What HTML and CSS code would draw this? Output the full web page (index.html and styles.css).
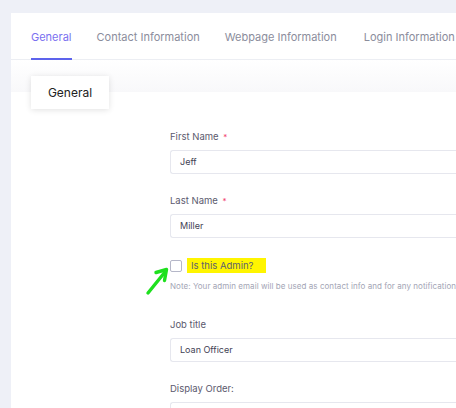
FILE: index.html
```html
<!DOCTYPE html>
<html>
<head>
<meta charset="utf-8">
<link rel="stylesheet" href="styles.css">
</head>
<body>
<div class="card">
  <nav class="tabs">
    <span class="tab active">General</span>
    <span class="tab">Contact Information</span>
    <span class="tab">Webpage Information</span>
    <span class="tab">Login Information</span>
  </nav>
  <div class="band">
    <div class="section-title">General</div>
  </div>
  <div class="form">
    <div class="field">
      <label class="label">First Name <span class="req">*</span></label>
      <div class="input">Jeff</div>
    </div>
    <div class="field">
      <label class="label">Last Name <span class="req">*</span></label>
      <div class="input">Miller</div>
    </div>
    <div class="check-field">
      <div class="check-row">
        <span class="checkbox"></span>
        <span class="highlight">Is this Admin?</span>
      </div>
      <p class="note">Note: Your admin email will be used as contact info and for any notifications</p>
      <svg class="arrow" width="30" height="34" viewBox="0 0 30 34">
        <path d="M6 29 L23 8" stroke="#1ee01e" stroke-width="3.4" stroke-linecap="round" fill="none"/>
        <path d="M14 8.5 L24.5 5.5 L22.5 16.5" stroke="#1ee01e" stroke-width="3.4" stroke-linecap="round" stroke-linejoin="round" fill="none"/>
      </svg>
    </div>
    <div class="field">
      <label class="label">Job title</label>
      <div class="input">Loan Officer</div>
    </div>
    <div class="field">
      <label class="label">Display Order:</label>
      <div class="input"></div>
    </div>
  </div>
</div>
</body>
</html>
```
FILE: styles.css
```css
html, body {
  margin: 0;
  padding: 0;
}
body {
  background: #eef0f7;
  font-family: Inter, "Noto Sans", sans-serif;
  overflow: hidden;
  height: 408px;
}
.card {
  margin: 13px 0 0 11px;
  background: #fff;
  height: 395px;
  overflow: hidden;
}
.tabs {
  display: flex;
  height: 46px;
  padding-left: 20px;
  border-bottom: 1px solid #eceef3;
  white-space: nowrap;
}
.tab {
  font-size: 11px;
  color: #8b8d9c;
  margin-right: 25px;
  display: flex;
  align-items: center;
  padding-top: 2px;
  border-bottom: 2px solid transparent;
  margin-bottom: -1px;
}
.tab.active {
  color: #7a70f0;
  border-bottom-color: #5d63ec;
}
.tab:nth-child(3) {
  margin-right: 27px;
}
.band {
  height: 16px;
  padding: 16px 0 0 20px;
  background: linear-gradient(#ffffff, #f8f8fa);
}
.section-title {
  width: 78px;
  height: 33px;
  background: #fff;
  box-shadow: 0 1px 6px rgba(0,0,0,0.12);
  display: flex;
  align-items: center;
  justify-content: center;
  font-size: 12px;
  color: #222;
  position: relative;
}
.form {
  padding: 38px 0 0 159px;
}
.field {
  display: flex;
  flex-direction: column;
  margin-bottom: 20px;
}
.label {
  font-size: 9.5px;
  color: #5b5a6e;
  height: 13px;
  line-height: 13px;
  margin-bottom: 7px;
}
.req {
  color: #f1416c;
  font-size: 8px;
  margin-left: 2px;
}
.input {
  height: 22px;
  border: 1px solid #e6e7ee;
  border-right: none;
  border-radius: 3px 0 0 3px;
  font-size: 9px;
  color: #3f4254;
  line-height: 22px;
  padding-left: 9px;
}
.check-field {
  position: relative;
  margin-bottom: 27px;
}
.check-row {
  display: flex;
  align-items: center;
  height: 15px;
}
.checkbox {
  width: 10px;
  height: 10px;
  border: 1px solid #b5b7c8;
  border-radius: 2px;
  margin-right: 5px;
}
.highlight {
  background: #fff500;
  font-size: 9.5px;
  color: #5d6070;
  padding: 1px 13px 1px 4px;
  line-height: 13px;
}
.note {
  margin: 8px 0 0;
  font-size: 8px;
  line-height: 10px;
  color: #a3a5b5;
  white-space: nowrap;
  letter-spacing: 0.05px;
}
.arrow {
  position: absolute;
  left: -28px;
  top: 6px;
}
```
